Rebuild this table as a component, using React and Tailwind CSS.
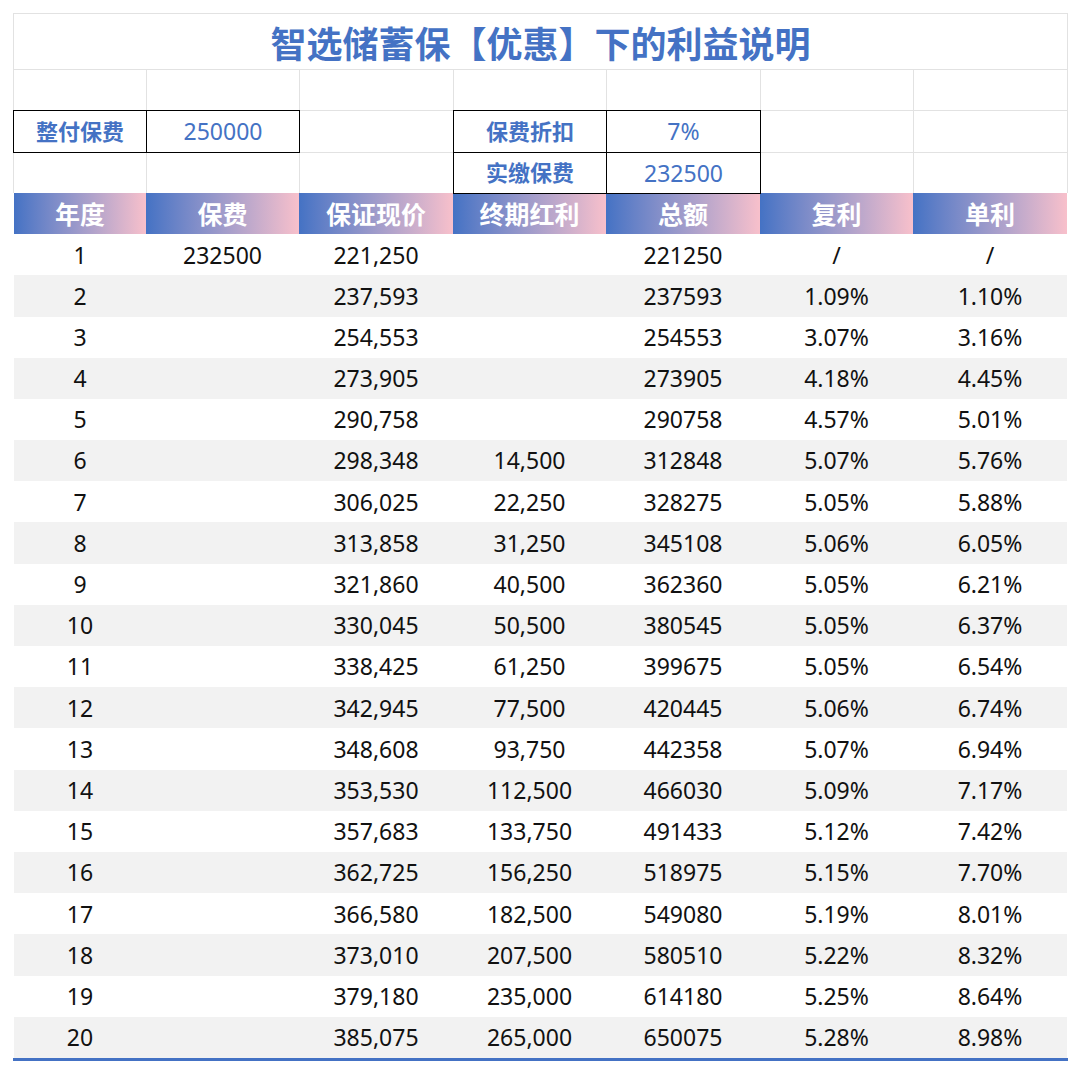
import React from "react";

const cols = "grid grid-cols-[132px_153px_154px_153px_154px_153px_154px]";
// same column edges, minus the 1px grid lines
const infoCols = "grid grid-cols-[132px_152px_153px_152px_153px_152px_153px]";

const rows = [
  ["1", "232500", "221,250", "", "221250", "/", "/"],
  ["2", "", "237,593", "", "237593", "1.09%", "1.10%"],
  ["3", "", "254,553", "", "254553", "3.07%", "3.16%"],
  ["4", "", "273,905", "", "273905", "4.18%", "4.45%"],
  ["5", "", "290,758", "", "290758", "4.57%", "5.01%"],
  ["6", "", "298,348", "14,500", "312848", "5.07%", "5.76%"],
  ["7", "", "306,025", "22,250", "328275", "5.05%", "5.88%"],
  ["8", "", "313,858", "31,250", "345108", "5.06%", "6.05%"],
  ["9", "", "321,860", "40,500", "362360", "5.05%", "6.21%"],
  ["10", "", "330,045", "50,500", "380545", "5.05%", "6.37%"],
  ["11", "", "338,425", "61,250", "399675", "5.05%", "6.54%"],
  ["12", "", "342,945", "77,500", "420445", "5.06%", "6.74%"],
  ["13", "", "348,608", "93,750", "442358", "5.07%", "6.94%"],
  ["14", "", "353,530", "112,500", "466030", "5.09%", "7.17%"],
  ["15", "", "357,683", "133,750", "491433", "5.12%", "7.42%"],
  ["16", "", "362,725", "156,250", "518975", "5.15%", "7.70%"],
  ["17", "", "366,580", "182,500", "549080", "5.19%", "8.01%"],
  ["18", "", "373,010", "207,500", "580510", "5.22%", "8.32%"],
  ["19", "", "379,180", "235,000", "614180", "5.25%", "8.64%"],
  ["20", "", "385,075", "265,000", "650075", "5.28%", "8.98%"],
];

const heads = ["年度", "保费", "保证现价", "终期红利", "总额", "复利", "单利"];

const Blank = () => <div className="bg-white" />;

const Boxed = ({ children, label }) => (
  <div
    className={`bg-white relative z-10 outline outline-1 outline-black flex items-center justify-center text-[#4472c4] ${
      label ? "font-bold text-[22px]" : "text-[23px]"
    }`}
  >
    {children}
  </div>
);

export default function App() {
  return (
    <div
      className="bg-white w-[1080px] h-[1075px] pt-[13px] px-[13px]"
      style={{ fontFamily: '"Noto Sans", "Noto Sans CJK SC", sans-serif' }}
    >
      <div className="w-[1055px]">
        {/* title */}
        <div className="h-[57px] border border-[#e2e2e2] flex items-center justify-center">
          <h1
            className="text-[36px] font-bold text-[#4472c4] leading-none"
            style={{ fontFamily: '"Noto Sans CJK SC", sans-serif' }}
          >
            智选储蓄保【优惠】下的利益说明
          </h1>
        </div>

        {/* info block */}
        <div className={`${infoCols} auto-rows-[40.4px] gap-px bg-[#e2e2e2] px-px`}>
          {Array.from({ length: 7 }).map((_, i) => (
            <Blank key={i} />
          ))}
          <Boxed label>整付保费</Boxed>
          <Boxed>250000</Boxed>
          <Blank />
          <Boxed label>保费折扣</Boxed>
          <Boxed>7%</Boxed>
          <Blank />
          <Blank />
          <Blank />
          <Blank />
          <Blank />
          <Boxed label>实缴保费</Boxed>
          <Boxed>232500</Boxed>
          <Blank />
          <Blank />
        </div>

        {/* header */}
        <div className={`${cols} mx-px h-[41px]`}>
          {heads.map((h) => (
            <div
              key={h}
              className="bg-gradient-to-r from-[#4472c4] to-[#f8c0cb] flex items-center justify-center text-white font-bold text-[25px]"
              style={{ fontFamily: '"Noto Sans CJK SC", sans-serif' }}
            >
              {h}
            </div>
          ))}
        </div>

        {/* data */}
        <div className="mx-px">
          {rows.map((r, i) => (
            <div
              key={i}
              className={`${cols} h-[41.2px] ${i % 2 === 1 ? "bg-[#f2f2f2]" : "bg-white"}`}
            >
              {r.map((c, j) => (
                <div key={j} className="flex items-center justify-center text-[23px] text-[#111]">
                  {c}
                </div>
              ))}
            </div>
          ))}
        </div>
        <div className="h-[3px] bg-[#4472c4]" />
      </div>
    </div>
  );
}
